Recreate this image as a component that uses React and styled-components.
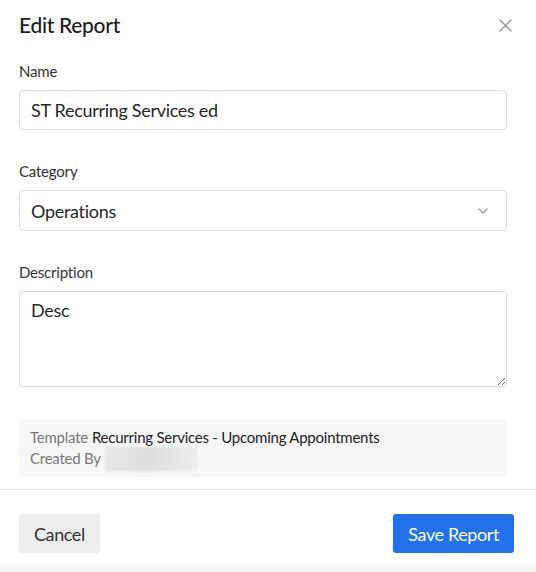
import React from "react";
import styled, { createGlobalStyle } from "styled-components";

const Global = createGlobalStyle`
  html, body { margin: 0; padding: 0; background: #fff; }
  body { font-family: "Lato", "Noto Sans", sans-serif; color: #222; }
  * { box-sizing: border-box; }
`;

const Modal = styled.div`
  width: 536px;
  height: 572px;
  display: flex;
  flex-direction: column;
  background: #fff;
  position: relative;
  overflow: hidden;
`;

const Header = styled.div`
  display: flex;
  align-items: center;
  justify-content: space-between;
  padding: 12px 24px 23px 19px;
`;

const Title = styled.h1`
  margin: 0;
  font-size: 21px;
  line-height: 26px;
  font-weight: 500;
  color: #1d1d1d;
  letter-spacing: -0.3px;
`;

const CloseButton = styled.button`
  border: 0;
  background: none;
  padding: 0;
  width: 13px;
  height: 13px;
  display: flex;
  align-items: center;
  justify-content: center;
  cursor: pointer;
`;

const Body = styled.div`
  padding: 0 29px 0 19px;
  display: flex;
  flex-direction: column;
`;

const Field = styled.div`
  display: flex;
  flex-direction: column;
  margin-bottom: ${(p) => p.$gap || 31}px;
`;

const Label = styled.label`
  font-size: 15px;
  color: #333;
  line-height: 20px;
  margin-bottom: 9px;
  letter-spacing: -0.2px;
`;

const TextInput = styled.input`
  height: 40px;
  border: 1px solid #dcdcdc;
  border-radius: 4px;
  padding: 0 11px;
  font-family: inherit;
  font-size: 18px;
  letter-spacing: -0.3px;
  color: #262626;
  outline: none;
`;

const SelectBox = styled.div`
  height: 41px;
  border: 1px solid #dcdcdc;
  border-radius: 4px;
  padding: 0 18px 0 11px;
  display: flex;
  align-items: center;
  justify-content: space-between;
  font-size: 18px;
  letter-spacing: -0.3px;
  color: #262626;
`;

const TextArea = styled.textarea`
  height: 96px;
  border: 1px solid #dcdcdc;
  border-radius: 4px;
  padding: 6px 11px;
  font-family: inherit;
  font-size: 18px;
  letter-spacing: -0.3px;
  line-height: 24px;
  color: #262626;
  outline: none;
  resize: vertical;
  display: block;
`;

const InfoBox = styled.div`
  background: #f7f7f7;
  border-radius: 4px;
  padding: 8px 11px 8px;
  font-size: 15px;
  line-height: 21px;
  letter-spacing: -0.24px;
`;

const InfoRow = styled.div`
  display: flex;
  align-items: center;
  gap: 4px;
  height: 21px;
  color: #222;
`;

const Key = styled.span`
  color: #777;
`;

const Redacted = styled.span`
  display: inline-block;
  width: 92px;
  height: 24px;
  margin-top: 1px;
  background: linear-gradient(100deg, #e9e9e9 0%, #dcdcdc 45%, #eeeeee 100%);
  filter: blur(1px);
`;

const Footer = styled.div`
  margin-top: 12px;
  border-top: 1px solid #e4e4e4;
  padding: 24px 22px 0 19px;
  display: flex;
  justify-content: space-between;
  align-items: flex-start;
  flex: 1;
`;

const Button = styled.button`
  height: 39px;
  border: 0;
  border-radius: 3px;
  padding: 0 ${(p) => (p.$primary ? 15 : 15)}px;
  font-family: inherit;
  font-size: 18px;
  letter-spacing: -0.4px;
  cursor: pointer;
  background: ${(p) => (p.$primary ? "#2371eb" : "#ededed")};
  color: ${(p) => (p.$primary ? "#fff" : "#333")};
`;

const BottomShade = styled.div`
  position: absolute;
  left: 0;
  right: 0;
  bottom: 0;
  height: 14px;
  background: linear-gradient(to bottom, rgba(242, 242, 242, 0) 0%, #f3f3f3 100%);
  pointer-events: none;
`;

export default function App() {
  return (
    <>
      <Global />
      <Modal>
        <Header>
          <Title>Edit Report</Title>
          <CloseButton aria-label="Close">
            <svg width="13" height="13" viewBox="0 0 13 13">
              <path d="M1 1L12 12M12 1L1 12" stroke="#9a9a9a" strokeWidth="1.5" strokeLinecap="round" />
            </svg>
          </CloseButton>
        </Header>
        <Body>
          <Field>
            <Label>Name</Label>
            <TextInput defaultValue="ST Recurring Services ed" />
          </Field>
          <Field $gap={31}>
            <Label>Category</Label>
            <SelectBox>
              <span>Operations</span>
              <svg width="10" height="6" viewBox="0 0 10 6">
                <path d="M1 1L5 5L9 1" stroke="#999" strokeWidth="1.3" fill="none" strokeLinecap="round" strokeLinejoin="round" />
              </svg>
            </SelectBox>
          </Field>
          <Field $gap={32}>
            <Label>Description</Label>
            <TextArea defaultValue="Desc" />
          </Field>
          <InfoBox>
            <InfoRow>
              <Key>Template</Key>
              <span>Recurring Services - Upcoming Appointments</span>
            </InfoRow>
            <InfoRow>
              <Key>Created By</Key>
              <Redacted />
            </InfoRow>
          </InfoBox>
        </Body>
        <Footer>
          <Button>Cancel</Button>
          <Button $primary>Save Report</Button>
        </Footer>
        <BottomShade />
      </Modal>
    </>
  );
}
